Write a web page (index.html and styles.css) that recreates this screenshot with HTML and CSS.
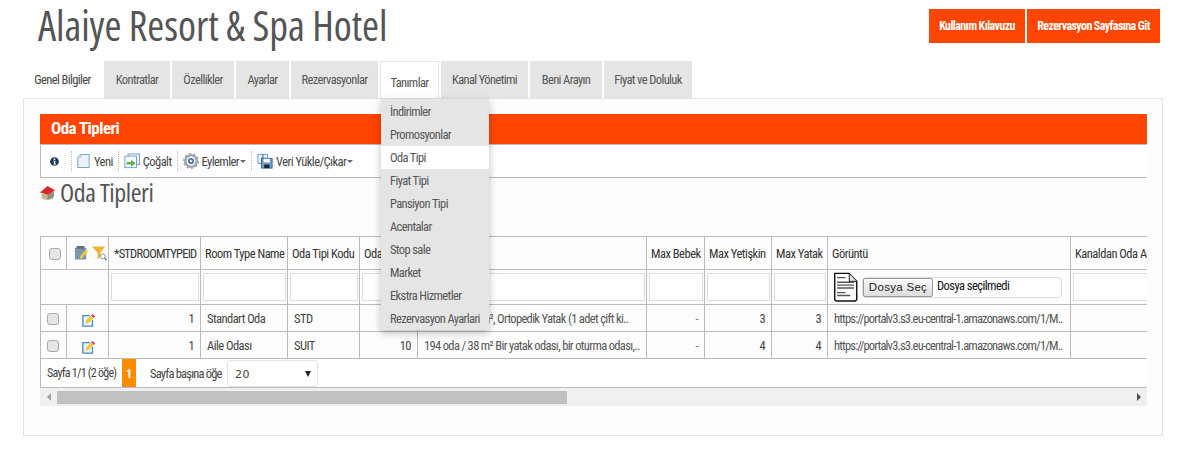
FILE: index.html
```html
<!DOCTYPE html>
<html lang="tr">
<head>
<meta charset="utf-8">
<title>Alaiye Resort &amp; Spa Hotel</title>
<link rel="stylesheet" href="styles.css">
</head>
<body>
<header class="top">
  <h1 class="brand">Alaiye Resort &amp; Spa Hotel</h1>
  <div class="top-actions"><a class="top-btn">Kullanım Kılavuzu</a><a class="top-btn">Rezervasyon Sayfasına Git</a></div>
</header>
<nav class="tabs">
  <a class="tab tab-first">Genel Bilgiler</a>
  <a class="tab t-kon">Kontratlar</a>
  <a class="tab t-oz">Özellikler</a>
  <a class="tab t-ay">Ayarlar</a>
  <a class="tab t-rez">Rezervasyonlar</a>
  <a class="tab tab-open">Tanımlar
    <div class="menu">
      <div class="menu-item">İndirimler</div>
      <div class="menu-item">Promosyonlar</div>
      <div class="menu-item menu-active">Oda Tipi</div>
      <div class="menu-item">Fiyat Tipi</div>
      <div class="menu-item">Pansiyon Tipi</div>
      <div class="menu-item">Acentalar</div>
      <div class="menu-item">Stop sale</div>
      <div class="menu-item">Market</div>
      <div class="menu-item">Ekstra Hizmetler</div>
      <div class="menu-item">Rezervasyon Ayarlari</div>
    </div>
  </a>
  <a class="tab t-kan">Kanal Yönetimi</a>
  <a class="tab t-ben">Beni Arayın</a>
  <a class="tab t-fi">Fiyat ve Doluluk</a>
</nav>
<main class="panel">
  <div class="bar">Oda Tipleri</div>
  <div class="toolbar">
    <svg class="info" viewBox="0 0 12 12"><circle cx="6" cy="6" r="5.8" fill="#1d3a5c"/><rect x="5" y="2" width="2" height="2" fill="#fff"/><path d="M4.4 5h2.700v4h1v1H4.400V9h1V6h-1z" fill="#fff"/></svg>
    <span class="sep"></span>
    <span class="tool"><svg class="ic" viewBox="0 0 16 18"><path d="M4.500 1H15v16H1V4.500z" fill="#eaf3fb" stroke="#5d93c4"/><path d="M4.500 1v3.500H1" fill="none" stroke="#9cc0e0"/></svg>Yeni</span>
    <span class="sep"></span>
    <span class="tool"><svg class="ic ic-wide" viewBox="0 0 18 18"><rect x="4.500" y="1" width="13" height="12" fill="#e8f1fa" stroke="#6a9ac8"/><rect x="1" y="3.500" width="13" height="13" fill="#f4f8fc" stroke="#6a9ac8"/><path d="M3 10h5V7.500l5 4-5 4V13H3z" fill="#5fb04a"/></svg>Çoğalt</span>
    <span class="sep"></span>
    <span class="tool"><svg class="ic ic-wide" viewBox="0 0 18 18"><circle cx="9" cy="9" r="6.500" fill="none" stroke="#a3a8ad" stroke-width="3"/><circle cx="9" cy="9" r="8" fill="none" stroke="#a3a8ad" stroke-width="2" stroke-dasharray="2.500 2.500"/><circle cx="9" cy="9" r="3.500" fill="#4d76ad"/><circle cx="9" cy="9" r="1.500" fill="#dfe8f2"/></svg>Eylemler<i class="caret"></i></span>
    <span class="sep"></span>
    <span class="tool"><svg class="ic ic-wide" viewBox="0 0 18 18"><path d="M1 1.500h6V12H1zM6 1.500h6V12H6z" fill="#e8f1fa" stroke="#5d93c4"/><rect x="5" y="6" width="12" height="11" fill="#6d9fd1" stroke="#2f5f92"/><rect x="7.500" y="6.500" width="7" height="4" fill="#fff"/><rect x="8" y="13" width="6" height="4" fill="#24282d"/></svg>Veri Yükle/Çıkar<i class="caret"></i></span>
  </div>
  <h2 class="page-title">
    <svg class="home" viewBox="0 0 14 14"><path d="M1 9l6-3 6 3-1 4-5 1-5-1z" fill="#c9b48f"/><path d="M0 7l7-6 7 4-6 4z" fill="#d8262c"/><path d="M7 9l6-3v5l-6 3z" fill="#8f8f86"/></svg>
    Oda Tipleri
  </h2>
  <div class="grid-wrap">
    <table class="grid">
      <colgroup>
        <col class="c1"><col class="c2"><col class="c3"><col class="c4"><col class="c5"><col class="c6"><col class="c7"><col class="c8"><col class="c9"><col class="c10"><col class="c11"><col class="c12">
      </colgroup>
      <thead>
        <tr class="head">
          <th class="center"><span class="chk chk-head"></span></th>
          <th class="center icons-cell"><svg class="head-ic" viewBox="0 0 16 16"><rect x="1" y="2" width="12" height="13" rx="1" fill="#8095ad"/><rect x="3" y="0.500" width="8" height="3" fill="#5d7088"/><path d="M6 14l1-3 6-7 2 2-6 7z" fill="#f2cc38"/></svg><svg class="head-ic" viewBox="0 0 16 16"><path d="M0 1h14L9 8v4L6 15V8z" fill="#eeb436"/><circle cx="11.500" cy="11.500" r="2.500" fill="#fff" stroke="#7b8ea3"/><path d="M13.500 13.500l2 2" stroke="#5a6f88" stroke-width="1.500"/></svg></th>
          <th class="tight">*STDROOMTYPEID</th><th>Room Type Name</th><th>Oda Tipi Kodu</th><th>Oda Sayısı</th><th>Açıklama</th><th>Max Bebek</th><th>Max Yetişkin</th><th>Max Yatak</th><th>Görüntü</th><th>Kanaldan Oda Adı</th>
        </tr>
        <tr class="filter">
          <td colspan="2"></td>
          <td><input class="fi"></td><td><input class="fi"></td><td><input class="fi"></td><td><input class="fi"></td><td><input class="fi"></td><td><input class="fi"></td><td><input class="fi"></td><td><input class="fi"></td>
          <td class="file-cell">
            <div class="file">
              <svg class="doc" viewBox="0 0 26 32"><path d="M1.500 1.500H17L25 10v19.500l-1.500 1.500H3l-1.500-1.500z" fill="#fff" stroke="#111" stroke-width="1.500"/><path d="M17 1.500V10h8" fill="#ddd" stroke="#111"/><path d="M4 6h9M4 11h18M4 14h18M4 17h18M4 22h9M4 25h14" stroke="#555" stroke-width="1.500"/></svg>
              <div class="file-box"><span class="file-btn">Dosya Seç</span><span class="file-name">Dosya seçilmedi</span></div>
            </div>
          </td>
          <td><input class="fi"></td>
        </tr>
      </thead>
      <tbody>
        <tr class="row">
          <td class="center"><span class="chk chk-row"></span></td>
          <td class="center edit-cell"><svg class="edit" viewBox="0 0 16 16"><path d="M9 3H1v12h11V8" fill="#eaf3fb" stroke="#4c89c4" stroke-width="1.500"/><path d="M4 12l1-4 7-7 3 3-7 7z" fill="#f0c93a"/><path d="M12 1l3 3-1.500 1.500-3-3z" fill="#c040a0"/></svg></td>
          <td class="num">1</td><td>Standart Oda</td><td>STD</td><td class="num">10</td><td class="clip">178 oda / 28 m², Ortopedik Yatak (1 adet çift ki..</td><td class="num dash">-</td><td class="num">3</td><td class="num">3</td><td class="clip url">https://portalv3.s3.eu-central-1.amazonaws.com/1/M..</td><td></td>
        </tr>
        <tr class="row">
          <td class="center"><span class="chk chk-row"></span></td>
          <td class="center edit-cell"><svg class="edit" viewBox="0 0 16 16"><path d="M9 3H1v12h11V8" fill="#eaf3fb" stroke="#4c89c4" stroke-width="1.500"/><path d="M4 12l1-4 7-7 3 3-7 7z" fill="#f0c93a"/><path d="M12 1l3 3-1.500 1.500-3-3z" fill="#c040a0"/></svg></td>
          <td class="num">1</td><td>Aile Odası</td><td>SUIT</td><td class="num">10</td><td class="clip">194 oda / 38 m² Bir yatak odası, bir oturma odası,..</td><td class="num dash">-</td><td class="num">4</td><td class="num">4</td><td class="clip url">https://portalv3.s3.eu-central-1.amazonaws.com/1/M..</td><td></td>
        </tr>
      </tbody>
    </table>
    <div class="pager">
      <span class="pg-text">Sayfa 1/1 (2 öğe)</span><span class="page-on">1</span><span class="per">Sayfa başına öğe</span>
      <span class="size">20<i class="size-arrow"></i></span>
    </div>
    <div class="scroll">
      <i class="arr arr-l"></i><div class="thumb"></div><i class="arr arr-r"></i>
    </div>
  </div>
</main>
</body>
</html>
```

FILE: styles.css
```css
* { box-sizing: border-box; }
html, body { margin: 0; padding: 0; }
body {
  background: #fff;
  color: #555;
  font-family: Roboto, "Liberation Sans", sans-serif;
  font-stretch: 75%;
  font-size: 12.500px;
  letter-spacing: -.55px;
  width: 1187px;
  height: 459px;
  overflow: hidden;
}
.top {
  display: flex;
  justify-content: space-between;
  height: 61px;
  padding: 9px 27px 0 38px;
}
.brand {
  margin: -3px 0 0;
  font-family: "Open Sans", sans-serif;
  font-stretch: 75%;
  font-size: 41px;
  line-height: 38px;
  letter-spacing: -.08px;
  font-weight: 500;
  color: #555;
}
.top-actions { display: flex; gap: 2px; }
.top-btn {
  display: flex;
  align-items: center;
  justify-content: center;
  height: 34px;
  background: #ff4500;
  color: #fff;
  font-size: 12px;
  font-weight: 700;
  letter-spacing: -.6px;
  white-space: nowrap;
  width: 96px;
}
.top-btn + .top-btn { width: 133px; }
.tabs {
  display: flex;
  gap: 2px;
  height: 37px;
  padding-left: 23px;
  letter-spacing: -.62px;
}
.tab {
  position: relative;
  display: flex;
  justify-content: center;
  align-items: center;
  background: #e5e5e5;
  color: #555;
  height: 37px;
  white-space: nowrap;
}
.tab-first { width: 79px; background: #fff; color: #444; }
.t-kon { width: 66px; }
.t-oz { width: 62px; }
.t-ay { width: 53px; }
.t-rez { width: 87px; }
.tab-open {
  width: 59px;
  background: #fff;
  border: 1px solid #e5e5e5;
  border-bottom: 0;
  padding-top: 5px;
  z-index: 3;
}
.t-kan { width: 87px; }
.t-ben { width: 72px; }
.t-fi { width: 88px; }
.menu {
  position: absolute;
  top: 37px;
  left: 0;
  width: 108px;
  padding-top: 1px;
  background: #e5e5e5;
  box-shadow: 0 3px 8px rgba(0, 0, 0, .25);
}
.menu-item {
  height: 23px;
  line-height: 23px;
  padding-left: 9px;
  color: #555;
}
.menu-active { background: #fff; }
.panel {
  margin-left: 23px;
  width: 1140px;
  height: 338px;
  padding: 15px 15px 0 16px;
  border: 1px solid #e3e3e3;
  background: #fdfdfd;
}
.bar {
  height: 30px;
  padding-left: 11px;
  line-height: 29px;
  font-size: 17px;
  font-weight: 700;
  letter-spacing: -.55px;
  color: #fff;
  background: #ff4500;
}
.toolbar {
  display: flex;
  align-items: center;
  height: 34px;
  padding-left: 9px;
  border: 1px solid #bbb;
  border-right: 0;
  background: #fff;
  color: #444;
}
.ic { width: 13px; height: 16px; margin-right: 4px; flex: none; }
.ic-wide { width: 16px; margin-right: 3px; }
.info { width: 9px; height: 9px; margin-right: 12px; flex: none; }
.sep { width: 0; height: 20px; border-left: 1px dotted #bbb; margin-right: 5px; }
.tool { display: flex; align-items: center; margin-right: 5px; }
.caret {
  width: 0;
  height: 0;
  margin-left: 1px;
  border: 3.500px solid transparent;
  border-top-color: #667;
  border-bottom: 0;
}
.page-title {
  display: flex;
  align-items: center;
  margin: 0;
  height: 58px;
  padding-bottom: 30px;
  font-family: "Open Sans", sans-serif;
  font-stretch: 75%;
  font-size: 26px;
  letter-spacing: -.4px;
  font-weight: 500;
  color: #555;
}
.home { width: 15px; height: 15px; margin-right: 5px; }
.grid-wrap { overflow: hidden; width: 1107px; }
.grid {
  table-layout: fixed;
  width: 1136px;
  border-collapse: collapse;
  border-top: 1px solid #bbb;
  color: #444;
}
.c1 { width: 26px; }
.c2 { width: 42px; }
.c3 { width: 92px; }
.c4 { width: 87px; }
.c5 { width: 72px; }
.c6 { width: 58px; }
.c7 { width: 229px; }
.c8 { width: 58px; }
.c9 { width: 67px; }
.c10 { width: 56px; }
.c11 { width: 243px; }
.c12 { width: 106px; }
.grid th, .grid td {
  border: 1px solid #bbb;
  padding: 0 0 0 6px;
  overflow: hidden;
  white-space: nowrap;
  font-weight: 400;
  text-align: left;
}
.grid th { color: #333; padding-left: 4px; letter-spacing: -.5px; }
.grid th.tight { padding-left: 5px; letter-spacing: -.75px; }
.grid .center { padding: 0; text-align: center; }
.grid .icons-cell { padding-left: 5px; }
.grid .edit-cell { padding: 6px 0 0 3px; }
.head { height: 33px; }
.filter { height: 35px; }
.row { height: 27px; }
.grid .filter td { padding: 0 1px 0 2px; }
.grid .filter .file-cell { padding-left: 5px; }
.grid .num { text-align: right; padding: 0 6px 0 0; }
.grid .clip { letter-spacing: -.66px; color: #555; }
.grid .url { letter-spacing: -.83px; }
.grid .dash { color: #777; }
.fi {
  display: block;
  width: 100%;
  height: 28px;
  background: #fff;
  border: 1px solid #ddd;
  margin: 0;
}
.chk {
  display: inline-block;
  width: 12px;
  height: 12px;
  border: 1px solid #aaa;
  border-radius: 3px;
  background: #e5e5e5;
  vertical-align: middle;
}
.chk-head { margin-left: 2px; }
.chk-row { margin-right: 2px; }
.head-ic { width: 15px; height: 16px; margin: 0 1.500px; vertical-align: middle; }
.edit { width: 14px; height: 14px; display: inline-block; }
.file { display: flex; align-items: center; }
.doc { width: 25px; height: 30px; flex: none; }
.file-box {
  display: flex;
  align-items: center;
  width: 200px;
  height: 21px;
  margin-left: 4px;
  border: 1px solid #ddd;
  border-radius: 4px;
  background: #fff;
}
.file-btn {
  display: flex;
  align-items: center;
  justify-content: center;
  width: 70px;
  height: 19px;
  font-family: "Liberation Sans", sans-serif;
  font-stretch: normal;
  font-size: 11.500px;
  letter-spacing: .3px;
  color: #222;
  background: linear-gradient(#fafafa, #ddd);
  border: 1px solid #999;
  border-radius: 2px;
}
.file-name { margin: 0 0 3px 4px; color: #111; }
.pager {
  display: flex;
  align-items: center;
  height: 29px;
  padding-left: 6px;
  background: #fff;
  border-bottom: 1px solid #bbb;
  border-left: 1px solid #bbb;
  color: #444;
}
.pg-text { font-size: 12px; letter-spacing: -.75px; width: 75px; white-space: nowrap; }
.page-on {
  display: flex;
  justify-content: center;
  align-items: center;
  width: 14px;
  height: 28px;
  background: #ff8c00;
  color: #fff;
  font-weight: 700;
}
.per { margin-left: 14px; width: 73px; letter-spacing: -.8px; white-space: nowrap; }
.size {
  position: relative;
  width: 91px;
  height: 27px;
  margin-left: 4px;
  padding-left: 7px;
  line-height: 27px;
  font-family: "DejaVu Sans", sans-serif;
  font-stretch: normal;
  font-size: 11px;
  letter-spacing: .5px;
  background: #fff;
  border: 1px solid #e5e5e5;
  border-radius: 3px;
}
.size-arrow {
  position: absolute;
  right: 6px;
  top: 10px;
  border: 3px solid transparent;
  border-top: 6px solid #223;
  border-bottom: 0;
}
.scroll {
  display: flex;
  align-items: center;
  height: 18px;
  padding-left: 7px;
  background: #f0f0f0;
}
.thumb { width: 510px; height: 13px; margin-left: 6px; background: #c1c1c1; }
.arr { border: 4px solid transparent; border-left-width: 0; border-right: 4px solid #a0a0a0; }
.arr-r { margin-left: auto; margin-right: 6px; border-right-width: 0; border-left: 4px solid #505050; border-right-color: transparent; }
```
